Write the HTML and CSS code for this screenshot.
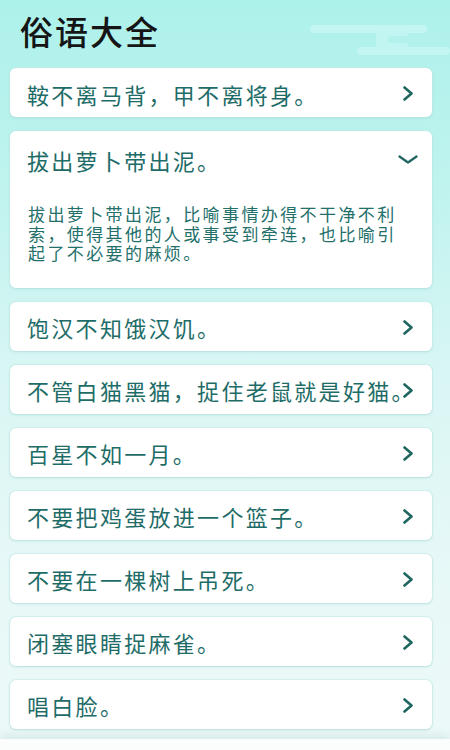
FILE: index.html
```html
<!DOCTYPE html>
<html lang="zh-CN">
<head>
<meta charset="utf-8">
<title>俗语大全</title>
<link rel="stylesheet" href="styles.css">
</head>
<body>
<div class="page">
  <header class="header">
    <h1 class="title">俗语大全</h1>
    <svg class="cloud" width="140" height="36" viewBox="0 0 140 36">
      <rect x="0" y="3" width="117" height="8" rx="4" fill="#c3f6f2"/>
      <rect x="66" y="9" width="32" height="18" rx="3" fill="#c0f5f1"/>
      <rect x="78" y="14" width="48" height="7" rx="3.5" fill="#b3f1ec"/>
      <rect x="47" y="25" width="93" height="8" rx="4" fill="#c3f6f2"/>
    </svg>
  </header>
  <main class="list">
    <div class="card">
      <div class="row"><span class="text">鞍不离马背，甲不离将身。</span><span class="icon"><svg width="10" height="15" viewBox="0 0 10 15"><polyline points="1.5,1.5 8.5,7.5 1.5,13.5" fill="none" stroke="#1f6661" stroke-width="2.6" stroke-linecap="round" stroke-linejoin="round"/></svg></span></div>
    </div>
    <div class="card open">
      <div class="row head"><span class="text">拔出萝卜带出泥。</span><span class="icon"><svg width="20" height="9" viewBox="0 0 20 9"><polyline points="1.5,1.5 10,7.5 18.5,1.5" fill="none" stroke="#1f6661" stroke-width="2.2" stroke-linecap="round" stroke-linejoin="round"/></svg></span></div>
      <p class="desc">拔出萝卜带出泥，比喻事情办得不干净不利索，使得其他的人或事受到牵连，也比喻引起了不必要的麻烦。</p>
    </div>
    <div class="card">
      <div class="row"><span class="text">饱汉不知饿汉饥。</span><span class="icon"><svg width="10" height="15" viewBox="0 0 10 15"><polyline points="1.5,1.5 8.5,7.5 1.5,13.5" fill="none" stroke="#1f6661" stroke-width="2.6" stroke-linecap="round" stroke-linejoin="round"/></svg></span></div>
    </div>
    <div class="card">
      <div class="row"><span class="text">不管白猫黑猫，捉住老鼠就是好猫。</span><span class="icon"><svg width="10" height="15" viewBox="0 0 10 15"><polyline points="1.5,1.5 8.5,7.5 1.5,13.5" fill="none" stroke="#1f6661" stroke-width="2.6" stroke-linecap="round" stroke-linejoin="round"/></svg></span></div>
    </div>
    <div class="card">
      <div class="row"><span class="text">百星不如一月。</span><span class="icon"><svg width="10" height="15" viewBox="0 0 10 15"><polyline points="1.5,1.5 8.5,7.5 1.5,13.5" fill="none" stroke="#1f6661" stroke-width="2.6" stroke-linecap="round" stroke-linejoin="round"/></svg></span></div>
    </div>
    <div class="card">
      <div class="row"><span class="text">不要把鸡蛋放进一个篮子。</span><span class="icon"><svg width="10" height="15" viewBox="0 0 10 15"><polyline points="1.5,1.5 8.5,7.5 1.5,13.5" fill="none" stroke="#1f6661" stroke-width="2.6" stroke-linecap="round" stroke-linejoin="round"/></svg></span></div>
    </div>
    <div class="card">
      <div class="row"><span class="text">不要在一棵树上吊死。</span><span class="icon"><svg width="10" height="15" viewBox="0 0 10 15"><polyline points="1.5,1.5 8.5,7.5 1.5,13.5" fill="none" stroke="#1f6661" stroke-width="2.6" stroke-linecap="round" stroke-linejoin="round"/></svg></span></div>
    </div>
    <div class="card">
      <div class="row"><span class="text">闭塞眼睛捉麻雀。</span><span class="icon"><svg width="10" height="15" viewBox="0 0 10 15"><polyline points="1.5,1.5 8.5,7.5 1.5,13.5" fill="none" stroke="#1f6661" stroke-width="2.6" stroke-linecap="round" stroke-linejoin="round"/></svg></span></div>
    </div>
    <div class="card">
      <div class="row"><span class="text">唱白脸。</span><span class="icon"><svg width="10" height="15" viewBox="0 0 10 15"><polyline points="1.5,1.5 8.5,7.5 1.5,13.5" fill="none" stroke="#1f6661" stroke-width="2.6" stroke-linecap="round" stroke-linejoin="round"/></svg></span></div>
    </div>
  </main>
  <nav class="bottom"></nav>
</div>
</body>
</html>
```
FILE: styles.css
```css
html, body {
  margin: 0;
  padding: 0;
}
body {
  font-family: "Noto Sans CJK SC", "Noto Sans", sans-serif;
  background: linear-gradient(180deg, #adf1eb 0px, #bff3ee 180px, #d9f6f4 380px, #e6f8f7 560px, #edf9f9 750px);
  min-height: 750px;
  overflow: hidden;
}
.page {
  display: flex;
  flex-direction: column;
}
.header {
  height: 68px;
  display: flex;
  justify-content: space-between;
  align-items: flex-start;
}
.title {
  margin: 0;
  padding: 15px 0 0 20px;
  font-size: 33px;
  line-height: 33px;
  font-weight: 500;
  letter-spacing: 2px;
  color: #151515;
}
.cloud {
  margin-top: 22px;
  display: block;
}
.list {
  display: flex;
  flex-direction: column;
  gap: 14px;
  margin: 0 18px 0 10px;
}
.card {
  background: #ffffff;
  border-radius: 6px;
  box-shadow: 0 1px 3px rgba(90, 170, 165, 0.22), 0 0 0 1px rgba(200, 236, 233, 0.6);
}
.row {
  height: 49px;
  display: flex;
  align-items: center;
  padding: 2px 14px 0 17px;
  box-sizing: border-box;
}
.row.head {
  height: 54px;
  padding-top: 3px;
}
.text {
  flex: 1;
  min-width: 0;
  white-space: nowrap;
  font-size: 22px;
  letter-spacing: 2.3px;
  color: #1e6c67;
}
.icon {
  width: 20px;
  flex: none;
  display: flex;
  justify-content: center;
  align-items: center;
}
.icon svg {
  display: block;
}
.desc {
  margin: 19px 29px 0 18px;
  padding-bottom: 25px;
  font-size: 17px;
  line-height: 19.5px;
  letter-spacing: 2.4px;
  color: #23706b;
}
.bottom {
  margin-top: 10px;
  height: 40px;
  background: #fbfdfd;
  box-shadow: 0 -4px 8px rgba(150, 190, 190, 0.25);
}
```
